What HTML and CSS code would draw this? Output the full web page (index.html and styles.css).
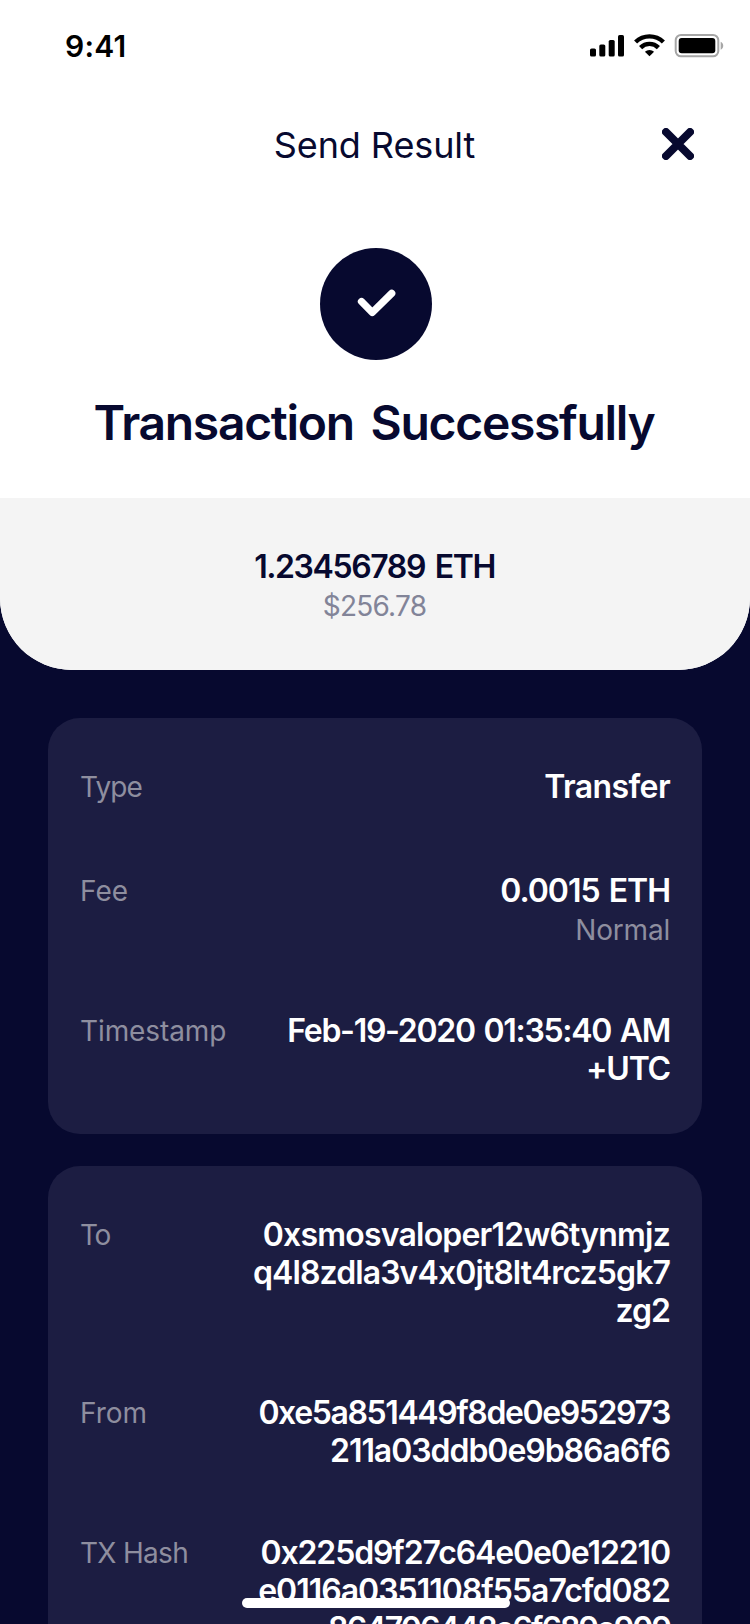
FILE: index.html
```html
<!DOCTYPE html>
<html lang="en">
<head>
<meta charset="utf-8">
<title>Send Result</title>
<link rel="stylesheet" href="styles.css">
</head>
<body>
<main class="screen">
  <section class="top">
    <div class="status">
      <span class="time">9:41</span>
      <svg class="status-icons" width="136" height="26" viewBox="0 0 136 26">
        <rect x="0" y="15.5" width="6" height="8" rx="1.6"/>
        <rect x="9.3" y="11.5" width="6" height="12" rx="1.6"/>
        <rect x="18.7" y="7" width="6" height="16.5" rx="1.6"/>
        <rect x="28" y="2" width="6" height="21.5" rx="1.6"/>
        <g fill="none" stroke="#000" stroke-width="4.4">
          <path d="M45.600 9A20 20 0 0 1 73.400 9"/>
          <path d="M50.600 14.600A12.500 12.500 0 0 1 68.400 14.600"/>
        </g>
        <path d="M54.900 18.700a6.800 6.800 0 0 1 9.200 0L59.500 23.300z"/>
        <rect x="85.700" y="2" width="42.600" height="21.300" rx="5.300" fill="none" stroke="#a6a6a6" stroke-width="2"/>
        <rect x="88.700" y="5" width="36.600" height="15.300" rx="3"/>
        <path d="M130.700 8.700c3.400 1.400 3.400 6.600 0 8z" fill="#a6a6a6"/>
      </svg>
    </div>
    <header class="nav">
      <h1 class="nav-title">Send Result</h1>
      <svg class="close" width="32" height="32" viewBox="0 0 32 32"><path d="M4 4L28 28M28 4L4 28"/></svg>
    </header>
    <div class="hero">
      <svg class="badge" width="112" height="112" viewBox="0 0 112 112"><circle cx="56" cy="56" r="56"/><path d="M41.500 53.500L52.300 64.500L71.700 45.300"/></svg>
      <h2 class="title">Transaction Successfully</h2>
    </div>
    <div class="amount">
      <strong class="crypto">1.23456789 ETH</strong>
      <span class="fiat">$256.78</span>
    </div>
  </section>
  <section class="details">
    <dl class="card">
      <div class="row"><dt class="d-type">Type</dt><dd><b class="l-transfer">Transfer</b></dd></div>
      <div class="row"><dt>Fee</dt><dd><b class="l-fee">0.0015 ETH</b><small>Normal</small></dd></div>
      <div class="row"><dt class="d-time">Timestamp</dt><dd><b class="l-date">Feb-19-2020 01:35:40 AM</b><b class="l-utc">+UTC</b></dd></div>
    </dl>
    <dl class="card">
      <div class="row"><dt class="d-to">To</dt><dd><b class="l-to1">0xsmosvaloper12w6tynmjz</b><b class="l-to2">q4l8zdla3v4x0jt8lt4rcz5gk7</b><b class="l-to3">zg2</b></dd></div>
      <div class="row"><dt>From</dt><dd><b class="l-from1">0xe5a851449f8de0e952973</b><b class="l-from2">211a03ddb0e9b86a6f6</b></dd></div>
      <div class="row"><dt class="d-hash">TX Hash</dt><dd><b class="l-tx1">0x225d9f27c64e0e0e12210</b><b class="l-tx2">e0116a0351108f55a7cfd082</b><b class="l-tx3">864706448a6f689a909</b></dd></div>
    </dl>
  </section>
  <div class="home-bar"></div>
</main>
</body>
</html>
```

FILE: styles.css
```css
* { box-sizing: border-box; margin: 0; padding: 0; }
body { background: #07092f; font-family: Inter, "Liberation Sans", sans-serif; font-feature-settings: "calt" 0; }
.screen { position: relative; width: 750px; height: 1624px; overflow: hidden; background: #07092f; }
.top { height: 670px; background: #fff; border-radius: 0 0 72px 72px; overflow: hidden; color: #07092f; }
.status { height: 88px; display: flex; justify-content: space-between; padding: 28px 24px 0 65px; }
.time { font-size: 30px; line-height: 37px; font-weight: 600; letter-spacing: 0.2px; color: #000; }
.status-icons { margin-top: 5px; }
.nav { height: 112px; display: grid; grid-template-columns: 1fr auto 1fr; align-items: start; padding: 33px 56px 0; }
.nav-title { grid-column: 2; font-size: 36px; line-height: 48px; font-weight: 400; letter-spacing: -0.1px; margin-right: 1px; }
.close { justify-self: end; margin-top: 7px; fill: none; stroke: #07092f; stroke-width: 8; stroke-linecap: round; }
.hero { height: 298px; padding: 48px 0 0 0; display: flex; flex-direction: column; align-items: center; }
.badge { margin-left: 2px; fill: #07092f; }
.badge path { fill: none; stroke: #fff; stroke-width: 7.300; stroke-linecap: round; stroke-linejoin: round; }
.title { margin-top: 33px; padding-right: 2px; font-size: 48px; line-height: 60px; font-weight: 600; letter-spacing: -1.3px; word-spacing: 6px; white-space: nowrap; }
.amount { height: 172px; background: #f4f4f4; display: flex; flex-direction: column; align-items: center; padding-top: 50px; }
.crypto { padding-right: 1px; font-size: 32px; line-height: 38px; font-weight: 600; letter-spacing: -1.4px; word-spacing: 3px; }
.fiat { margin-top: 1px; padding-right: 1px; font-size: 28px; line-height: 38px; letter-spacing: -0.8px; color: #828498; }
.details { padding: 48px 48px 0; display: flex; flex-direction: column; gap: 32px; }
.card { padding: 50px 32px 46px; border-radius: 32px; background: #1c1d42; display: flex; flex-direction: column; gap: 64px; }
.row { display: flex; justify-content: space-between; min-height: 40px; }
dt { font-size: 28px; line-height: 38px; color: #8e8e9f; white-space: nowrap; }
dd { display: flex; flex-direction: column; align-items: flex-end; }
b { font-size: 32px; line-height: 38px; font-weight: 600; letter-spacing: -1px; color: #fff; white-space: nowrap; }
small { height: 38px; font-size: 28px; line-height: 40px; letter-spacing: -0.2px; color: #8e8e9f; }
.d-type { letter-spacing: -0.9px; }
.d-time { letter-spacing: -0.1px; }
.d-to { letter-spacing: -1.5px; }
.d-hash { letter-spacing: -0.7px; }
.l-transfer { letter-spacing: -0.6px; }
.l-fee { letter-spacing: -1px; word-spacing: 2px; }
.l-date { letter-spacing: -1.3px; word-spacing: 2px; }
.l-utc { letter-spacing: -1.2px; }
.l-to1 { letter-spacing: -0.8px; }
.l-to2 { letter-spacing: -0.9px; }
.l-from1 { letter-spacing: -1.4px; }
.l-from2 { letter-spacing: -1.05px; }
.l-tx1 { letter-spacing: -1.12px; }
.l-tx3 { letter-spacing: -1.9px; }
.home-bar { position: absolute; left: 242px; top: 1598px; width: 268px; height: 10px; border-radius: 5px; background: #fff; }
```
